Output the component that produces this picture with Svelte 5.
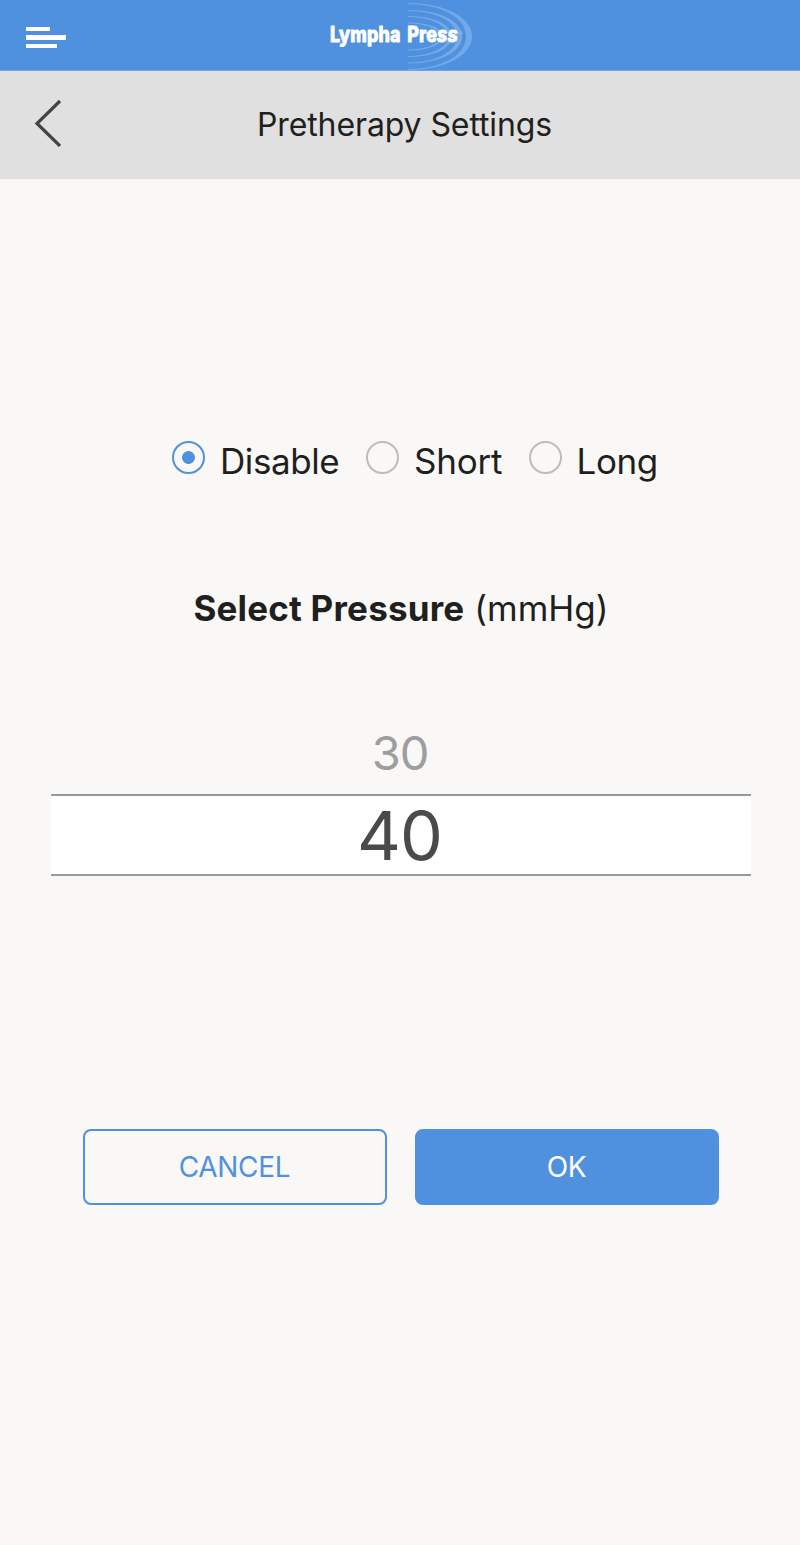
<script lang="ts">
	const modes = ['Disable', 'Short', 'Long'];
	const pressures = [30, 40];

	let mode = $state('Disable');
	let pressure = $state(40);
</script>

<div class="screen">
	<header class="topbar">
		<button class="menu" aria-label="Menu">
			<span class="line short"></span>
			<span class="line"></span>
			<span class="line medium"></span>
		</button>
		<svg class="logo" width="150" height="70" viewBox="0 0 150 70" role="img" aria-label="Lympha Press">
			<g fill="#74a9e8">
				<path d="M80 3 C118 3 144 18 144 36.500 S118 70 80 70 V69 C114 69 138 55 138 36.500 S114 4 80 4 Z" />
				<path d="M80 10 C112 10 134 21 134 36.500 S112 63.500 80 63.500 V62.500 C109 62.500 129 51 129 36.500 S109 11 80 11 Z" />
				<path d="M80 16 C107 16 124 25 124 36.500 S107 57 80 57 V56 C104 56 120 47 120 36.500 S104 17 80 17 Z" />
				<path d="M80 22.500 C100 22.500 115 28 115 36.500 S100 50.500 80 50.500 V49.500 C98 49.500 111 44 111 36.500 S98 23.500 80 23.500 Z" />
			</g>
			<text class="brand" transform="translate(2 42) scale(0.85 1)">Lympha Pre<tspan class="slanted">ss</tspan></text>
			<circle cx="132.500" cy="33" r="2" fill="#7fb1ea" />
		</svg>
	</header>

	<div class="titlebar">
		<button class="back" aria-label="Back">
			<svg width="28" height="48" viewBox="0 0 28 48">
				<path d="M26 2 L3 24.500 L26 47" fill="none" stroke="#444" stroke-width="3.200" />
			</svg>
		</button>
		<h1>Pretherapy Settings</h1>
	</div>

	<main>
		<div class="modes" role="radiogroup" aria-label="Pretherapy">
			{#each modes as item}
				<label class={item.toLowerCase()}>
					<input type="radio" name="mode" value={item} bind:group={mode} />
					<span>{item}</span>
				</label>
			{/each}
		</div>

		<h2><strong>Select Pressure</strong> <span>(mmHg)</span></h2>

		<div class="picker">
			{#each pressures as value}
				<button class="value" class:selected={value === pressure} onclick={() => (pressure = value)}>
					<span>{value}</span>
				</button>
			{/each}
		</div>

		<div class="actions">
			<button class="cancel"><span>CANCEL</span></button>
			<button class="ok"><span>OK</span></button>
		</div>
	</main>
</div>

<style>
	:global(body) {
		background: #f9f8f7;
	}

	.screen {
		min-height: 1545px;
		box-sizing: border-box;
		background: #f9f8f7;
		color: #1f1f20;
		font-family: Inter, Roboto, sans-serif;
	}

	button {
		padding: 0;
		border: 0;
		background: none;
		color: inherit;
		font: inherit;
	}

	.topbar {
		display: grid;
		grid-template-columns: 328px 150px 1fr;
		height: 71px;
		background: linear-gradient(#5091df 70px, #70a5e3 70px);
	}

	.menu {
		display: flex;
		flex-direction: column;
		align-items: flex-start;
		gap: 4px;
		padding: 27px 0 0 26.4px;
	}

	.line {
		width: 39.4px;
		height: 4.3px;
		background: #fff;
	}

	.line.short {
		width: 24px;
	}

	.line.medium {
		width: 31px;
	}

	.brand {
		font-size: 21px;
		font-weight: 800;
		letter-spacing: 0.2px;
		word-spacing: 3px;
		fill: #fff;
		stroke: #fff;
		stroke-width: 0.8;
		stroke-linejoin: round;
	}

	.slanted {
		font-style: italic;
	}

	.titlebar {
		display: grid;
		grid-template-columns: 110px 1fr 101px;
		align-items: center;
		height: 108px;
		background: #e0e0e0;
	}

	.back {
		display: flex;
		padding: 0 0 4px 34px;
	}

	h1 {
		margin: 0;
		font-size: 32px;
		font-weight: 400;
		line-height: 40px;
		letter-spacing: -0.1px;
		text-align: center;
	}

	main {
		display: flex;
		flex-direction: column;
		padding: 259px 49px 0 51px;
	}

	.modes {
		display: flex;
		height: 46px;
		padding-left: 121px;
	}

	label {
		display: flex;
		align-items: flex-start;
		font-size: 35px;
		line-height: 46px;
		letter-spacing: -0.4px;
	}

	.disable {
		width: 194px;
	}

	label.short {
		width: 162.5px;
		letter-spacing: -0.2px;
	}

	input {
		appearance: none;
		box-sizing: border-box;
		flex: none;
		width: 33px;
		height: 33px;
		margin: 3px 15px 0 0;
		border: 2px solid #bcbcbc;
		border-radius: 50%;
	}

	input:checked {
		border-color: #5091df;
		background: radial-gradient(circle, #5091df 6px, transparent 6.8px);
	}

	h2 {
		margin: 100px 0 0;
		font-size: 35px;
		font-weight: 400;
		line-height: 48px;
		text-align: center;
	}

	h2 strong {
		letter-spacing: 0.2px;
	}

	.picker {
		display: flex;
		flex-direction: column;
		margin-top: 78px;
	}

	.value {
		height: 84px;
		padding: 2px 2px 0 0;
		color: #9e9e9e;
		font-size: 47px;
		line-height: 82px;
		letter-spacing: -1px;
	}

	.value.selected {
		box-sizing: border-box;
		height: 82px;
		padding: 0 3px 0 0;
		border: solid #999;
		border-width: 2px 0;
		background: #fff;
		color: #4a4a4a;
		font-size: 68px;
		line-height: 78px;
	}

	.actions {
		display: grid;
		grid-template-columns: 304px 304px;
		gap: 28px;
		justify-content: center;
		margin-top: 253px;
	}

	.actions button {
		box-sizing: border-box;
		height: 76px;
		padding-right: 1px;
		border: 2px solid #5091df;
		border-radius: 8px;
		color: #5091df;
		font-size: 28px;
		line-height: 36px;
		letter-spacing: -0.3px;
	}

	.actions .ok {
		background: #5091df;
		color: #fff;
	}
</style>
